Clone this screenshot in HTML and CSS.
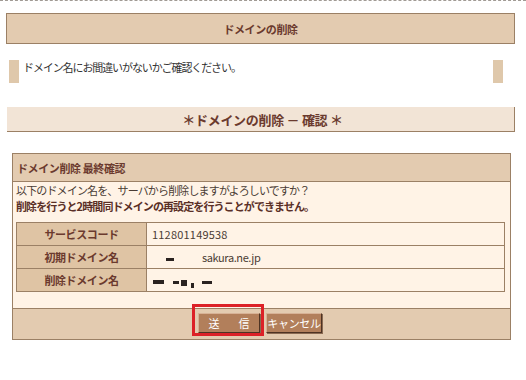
FILE: index.html
```html
<!DOCTYPE html>
<html lang="ja">
<head>
<meta charset="utf-8">
<title>ドメインの削除</title>
<link rel="stylesheet" href="styles.css">
</head>
<body>
<div class="page">
  <div class="topline"></div>
  <h1 class="title">ドメインの削除</h1>
  <div class="notice">
    <span class="bar"></span>
    <p class="notice-text">ドメイン名にお間違いがないかご確認ください。</p>
    <span class="bar bar-right"></span>
  </div>
  <h2 class="subtitle">＊ドメインの削除 － 確認 ＊</h2>
  <div class="panel">
    <div class="panel-head">ドメイン削除 最終確認</div>
    <div class="panel-body">
      <p class="msg">以下のドメイン名を、サーバから削除しますがよろしいですか？</p>
      <p class="msg msg-strong">削除を行うと2時間同ドメインの再設定を行うことができません。</p>
      <table class="info">
        <tr><th>サービスコード</th><td>112801149538</td></tr>
        <tr><th>初期ドメイン名</th><td><span class="mask m1"></span><span class="domain">sakura.ne.jp</span></td></tr>
        <tr><th>削除ドメイン名</th><td><span class="mask m2"></span><span class="mask m3"></span><span class="mask m4"></span><span class="mask m5"></span><span class="mask m6"></span></td></tr>
      </table>
    </div>
    <div class="panel-foot">
      <span class="btn-wrap">
        <button class="btn btn-send">送　信</button>
        <span class="highlight"></span>
      </span>
      <button class="btn btn-cancel">キャンセル</button>
    </div>
  </div>
</div>
</body>
</html>
```
FILE: styles.css
```css
* { box-sizing: border-box; }
html, body { margin: 0; padding: 0; background: #ffffff; }
body {
  font-family: "Noto Sans CJK JP", "Noto Sans", sans-serif;
  font-size: 11px;
  color: #333333;
  width: 526px;
  height: 380px;
  overflow: hidden;
}
.topline {
  height: 1px;
  border-top: 1px dashed #a09a94;
}
.title {
  margin: 12px 11px 0 6px;
  height: 31px;
  background: #e3cbb0;
  border: 1px solid #9b8065;
  color: #6b3a2e;
  font-size: 11px;
  font-weight: bold;
  display: flex;
  align-items: center;
  justify-content: center;
  letter-spacing: -0.4px;
}
.notice {
  margin-top: 16px;
  height: 23px;
  display: flex;
  align-items: flex-start;
  padding-left: 9px;
}
.bar {
  width: 10px;
  height: 23px;
  background: #dfc8ab;
  flex: none;
}
.bar-right { margin-left: auto; margin-right: 23px; }
.notice-text {
  margin: 0 0 0 4px;
  line-height: 14px;
  color: #333;
  letter-spacing: -1.1px;
}
.subtitle {
  margin: 24px 11px 0 7px;
  height: 25px;
  background: #f2e4d6;
  border-right: 1px solid #9b8065;
  border-bottom: 1px solid #9b8065;
  color: #6b3a2e;
  font-size: 13px;
  font-weight: bold;
  display: flex;
  align-items: center;
  justify-content: center;
  letter-spacing: -0.3px;
  padding-left: 4px;
}
.panel {
  margin: 21px 15px 0 12px;
  border: 1px solid #9b8065;
  background: #fff3e6;
}
.panel-head {
  height: 28px;
  background: #e3cbb0;
  border-bottom: 1px solid #9b8065;
  color: #6b3a2e;
  font-weight: bold;
  font-size: 11px;
  display: flex;
  align-items: center;
  padding-left: 4px;
  letter-spacing: -0.4px;
}
.panel-body {
  padding: 0 5px 16px 3px;
  border-bottom: 1px solid #9b8065;
}
.msg {
  margin: 0;
  line-height: 16px;
  color: #4a3c34;
  letter-spacing: -0.85px;
}
.msg-strong {
  font-weight: bold;
  color: #5a2f26;
  letter-spacing: -0.9px;
}
.info {
  margin-top: 8px;
  width: 100%;
  border-collapse: collapse;
}
.info th, .info td {
  height: 23px;
  border: 1px solid #9b8065;
  padding: 0;
}
.info th {
  width: 130px;
  background: #dfc4a4;
  color: #6b3a2e;
  font-weight: bold;
  text-align: center;
  letter-spacing: -0.4px;
}
.info td {
  padding-left: 5px;
  color: #4a3c34;
  letter-spacing: 0.2px;
}
.mask {
  display: inline-block;
  height: 3px;
  background: #2a2220;
  vertical-align: middle;
}
.m1 { width: 8px; margin-left: 14px; }
.domain { margin-left: 28px; letter-spacing: -0.4px; }
.m2 { width: 11px; margin-left: 1px; height: 4px; }
.m3 { width: 6px; margin-left: 9px; }
.m4 { width: 6px; margin-left: 2px; height: 6px; vertical-align: -1px; }
.m5 { width: 3px; margin-left: 4px; height: 5px; vertical-align: -3px; }
.m6 { width: 10px; margin-left: 8px; }
.panel-foot {
  height: 30px;
  background: #e3cbb0;
  display: flex;
  justify-content: center;
  align-items: flex-start;
  padding-top: 4px;
  padding-right: 3px;
  gap: 6px;
}
.btn-wrap { position: relative; display: inline-block; }
.btn {
  height: 20px;
  margin: 0;
  background: #b27f5b;
  color: #ffffff;
  font-family: "Noto Sans CJK JP", sans-serif;
  font-size: 11px;
  line-height: 16px;
  padding: 0;
  white-space: nowrap;
  border: 1px solid;
  border-color: #d7b296 #4e3323 #4e3323 #d7b296;
  box-shadow: 1px 1px 0 #8a6a52;
  display: block;
}
.btn-send { width: 62px; letter-spacing: 4px; padding-left: 4px; }
.btn-cancel { width: 56px; letter-spacing: -0.3px; }
.highlight {
  position: absolute;
  left: -6px;
  top: -9px;
  width: 72px;
  height: 32px;
  border: 3px solid #dc2127;
  pointer-events: none;
}
```
